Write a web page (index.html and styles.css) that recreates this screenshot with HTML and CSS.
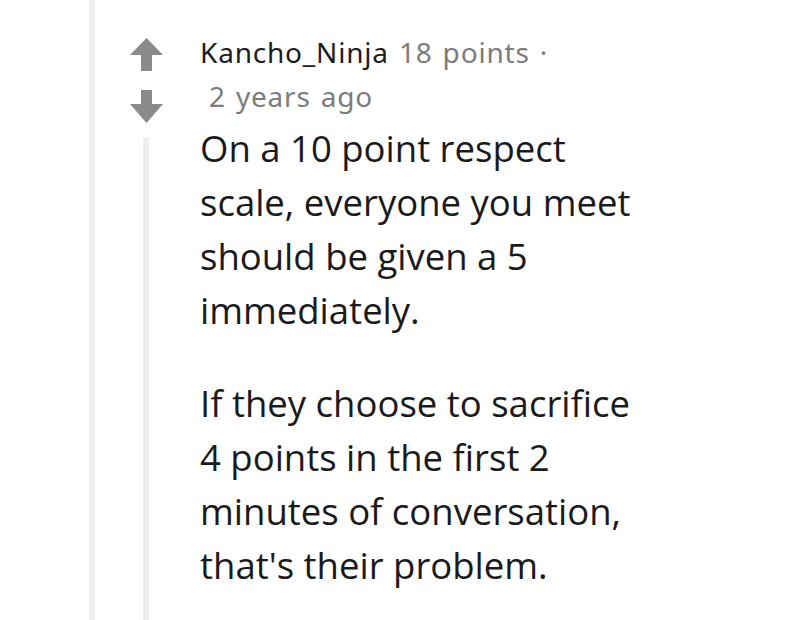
FILE: index.html
```html
<!DOCTYPE html>
<html>
<head>
<meta charset="utf-8">
<link rel="stylesheet" href="styles.css">
</head>
<body>
<div class="thread">
  <div class="comment">
    <div class="votes">
      <svg class="arrow up" width="33" height="33" viewBox="0 0 33 33"><polygon points="0,17 16.5,0 33,17 22,17 22,33 11,33 11,17" fill="#888a8c"/></svg>
      <svg class="arrow down" width="33" height="33" viewBox="0 0 33 33"><polygon points="11,0 22,0 22,14 33,14 16.5,33 0,14 11,14" fill="#888a8c"/></svg>
      <div class="rail"></div>
    </div>
    <div class="content">
      <div class="meta">
        <span class="author">Kancho_Ninja</span> <span class="score">18 points</span> <span class="dot">·</span>
      </div>
      <div class="meta time">2 years ago</div>
      <div class="body">
        <p>On a 10 point respect scale, everyone you meet should be given a 5 immediately.</p>
        <p>If they choose to sacrifice 4 points in the first 2 minutes of conversation, that's their problem.</p>
      </div>
    </div>
  </div>
</div>
</body>
</html>
```
FILE: styles.css
```css
html, body {
  margin: 0;
  padding: 0;
  background: #ffffff;
  height: 100%;
  overflow: hidden;
}
.thread {
  margin-left: 89px;
  border-left: 6px solid #edeeef;
  height: 620px;
}
.comment {
  display: flex;
  height: 100%;
}
.votes {
  width: 105px;
  flex: none;
  display: flex;
  flex-direction: column;
  padding-top: 38px;
  box-sizing: border-box;
}
.arrow {
  display: block;
  margin-left: 35px;
}
.arrow.down {
  margin-top: 19px;
}
.rail {
  flex: 1;
  width: 6px;
  margin-left: 48px;
  margin-top: 14px;
  background: #edeeef;
}
.content {
  flex: 1;
  padding-top: 30px;
}
.meta {
  font-family: "Noto Sans", Roboto, sans-serif;
  font-size: 28px;
  letter-spacing: 0.8px;
  word-spacing: 2px;
  line-height: 44px;
  color: #7c7c7c;
}
.author {
  color: #1c1c1c;
}
.time {
  padding-left: 9px;
}
.body {
  font-family: "Open Sans", "Noto Sans", sans-serif;
  font-size: 36.5px;
  line-height: 54px;
  color: #1a1a1b;
  width: 438px;
  padding-top: 3px;
}
.body p {
  margin: 0 0 39px 0;
}
```
